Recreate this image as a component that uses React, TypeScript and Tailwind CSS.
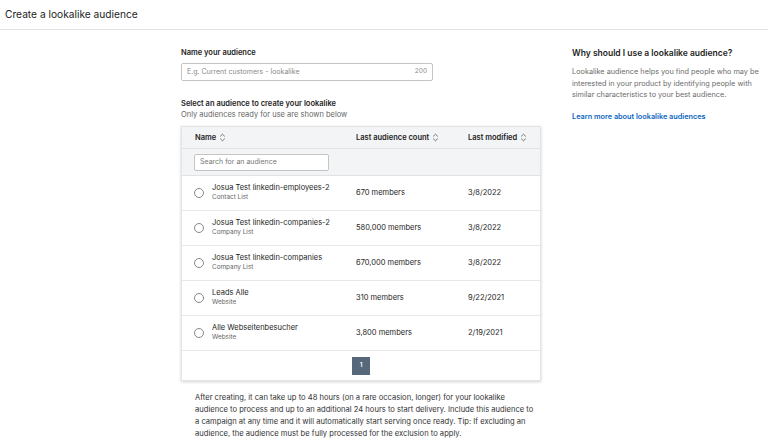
import React from "react";

const rows = [
  { name: "Josua Test linkedin-employees-2", type: "Contact List", count: "670 members", date: "3/8/2022" },
  { name: "Josua Test linkedin-companies-2", type: "Company List", count: "580,000 members", date: "3/8/2022" },
  { name: "Josua Test linkedin-companies", type: "Company List", count: "670,000 members", date: "3/8/2022" },
  { name: "Leads Alle", type: "Website", count: "310 members", date: "9/22/2021" },
  { name: "Alle Webseitenbesucher", type: "Website", count: "3,800 members", date: "2/19/2021" },
];

function SortIcon() {
  return (
    <svg width="7" height="9" viewBox="0 0 7 9" fill="none" className="ml-[3px] inline-block">
      <path d="M1.2 3.4L3.5 1.2L5.8 3.4" stroke="#666" strokeWidth="0.9" />
      <path d="M1.2 5.6L3.5 7.8L5.8 5.6" stroke="#666" strokeWidth="0.9" />
    </svg>
  );
}

export default function App() {
  return (
    <div
      className="w-[768px] h-[442px] overflow-hidden bg-white text-[#1d1d1d]"
      style={{ fontFamily: "Inter, 'Liberation Sans', sans-serif" }}
    >
      <header className="h-[30px] border-b border-[#e3e3e3] flex items-center pl-[5px]">
        <h1 className="text-[10.2px] text-[#222]">Create a lookalike audience</h1>
      </header>

      <main className="flex pl-[181px] pt-[18px]">
        <div className="w-[360px]">
          <div className="text-[7.5px] font-semibold leading-[10px] h-[10px]">Name your audience</div>
          <div className="mt-[5px] w-[252px] h-[18px] border border-[#c4c4c4] rounded-[2px] flex items-center justify-between px-[5px] text-[7px] text-[#8a8a8a]">
            <span>E.g. Current customers - lookalike</span>
            <span className="text-[6.5px]">200</span>
          </div>

          <div className="mt-[17px] text-[7.5px] font-semibold leading-[11px]">Select an audience to create your lookalike</div>
          <div className="text-[7.5px] text-[#666] leading-[11px]">Only audiences ready for use are shown below</div>

          <div className="mt-[6px] w-[360px] bg-white border border-[#e4e4e4] shadow-[0_1px_3px_rgba(0,0,0,0.18)]">
            <div className="bg-[#f3f4f5] h-[22px] flex items-center text-[7.5px] font-semibold border-b border-[#e2e2e2]">
              <div className="w-[174px] pl-[13px] flex items-center">Name<SortIcon /></div>
              <div className="w-[112px] flex items-center">Last audience count<SortIcon /></div>
              <div className="flex items-center">Last modified<SortIcon /></div>
            </div>
            <div className="bg-[#f3f4f5] h-[27px] flex items-center pl-[12px] border-b border-[#e2e2e2]">
              <div className="w-[135px] h-[17px] bg-white border border-[#c4c4c4] rounded-[2px] flex items-center px-[5px] text-[7px] text-[#777]">
                Search for an audience
              </div>
            </div>
            {rows.map((r) => (
              <div key={r.name} className="h-[35px] flex items-center border-b border-[#e8e8e8] text-[7.5px]">
                <div className="w-[174px] pl-[12px] flex items-center">
                  <span className="w-[10px] h-[10px] rounded-full border border-[#888] mr-[8px] shrink-0" />
                  <div className="flex flex-col leading-[9.5px] -mt-[1px]">
                    <span>{r.name}</span>
                    <span className="text-[6.4px] text-[#666]">{r.type}</span>
                  </div>
                </div>
                <div className="w-[112px]">{r.count}</div>
                <div>{r.date}</div>
              </div>
            ))}
            <div className="h-[29px] flex items-center justify-center">
              <div className="w-[18px] h-[18px] bg-[#56687a] text-white text-[6.5px] font-semibold flex items-center justify-center">1</div>
            </div>
          </div>

          <p className="mt-[11px] ml-[14px] w-[340px] text-[7.6px] leading-[12px] text-[#333]">
            After creating, it can take up to 48 hours (on a rare occasion, longer) for your lookalike audience to process and up to an additional 24 hours to start delivery. Include this audience to a campaign at any time and it will automatically start serving once ready. Tip: If excluding an audience, the audience must be fully processed for the exclusion to apply.
          </p>
        </div>

        <aside className="ml-[31px] w-[190px]">
          <h2 className="text-[8.5px] font-semibold leading-[12px] h-[10px] -mt-[1px]">Why should I use a lookalike audience?</h2>
          <p className="mt-[9px] text-[7.3px] leading-[11.5px] text-[#6b6b6b]">
            Lookalike audience helps you find people who may be interested in your product by identifying people with similar characteristics to your best audience.
          </p>
          <a className="block mt-[11px] text-[7.3px] font-semibold text-[#0a66c2]">Learn more about lookalike audiences</a>
        </aside>
      </main>
    </div>
  );
}
